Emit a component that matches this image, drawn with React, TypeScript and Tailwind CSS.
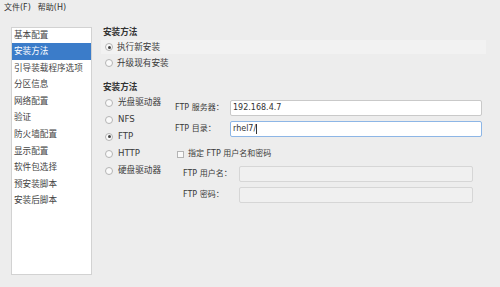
const FONT = "font-['DejaVu_Sans','Noto_Sans_CJK_SC',sans-serif]";

const categories = [
  "基本配置",
  "安装方法",
  "引导装载程序选项",
  "分区信息",
  "网络配置",
  "验证",
  "防火墙配置",
  "显示配置",
  "软件包选择",
  "预安装脚本",
  "安装后脚本",
];

const sources = ["光盘驱动器", "NFS", "FTP", "HTTP", "硬盘驱动器"];

function Radio({ checked }: { checked?: boolean }) {
  return (
    <span className="w-[8px] h-[8px] rounded-full border border-[#b4b4b4] bg-[#fafafa] flex items-center justify-center flex-shrink-0">
      {checked && <span className="w-[3px] h-[3px] rounded-full bg-[#444]" />}
    </span>
  );
}

export default function App() {
  return (
    <div className={`w-[500px] h-[287px] bg-[#ededed] text-[#3a3a3a] text-[8.6px] leading-none flex flex-col overflow-hidden ${FONT}`}>
      <div className="h-[15px] flex items-center gap-[7px] px-[4px] text-[#333] text-[8px]">
        <span>文件(F)</span>
        <span>帮助(H)</span>
      </div>

      <div className="flex flex-1">
        <div className="ml-[11px] mt-[12px] mb-[12px] w-[81px] bg-white border border-[#d2d2d2] flex flex-col">
          {categories.map((c, i) => (
            <div
              key={c}
              className={`${i === 0 ? "h-[15px]" : "h-[16.6px]"} flex items-center px-[2px] whitespace-nowrap ${
                i === 1 ? "bg-[#3b7cc9] text-white" : "text-[#444]"
              }`}
            >
              {c}
            </div>
          ))}
        </div>

        <div className="ml-[11px] flex-1 flex flex-col pr-[14px]">
          <div className="mt-[10px] h-[14px] flex items-center font-bold text-[#333]">安装方法</div>
          <div className="mt-[1px] h-[14px] flex items-center gap-[4px] pl-[4px] -ml-[2px] bg-[#f2f2f2]">
            <Radio checked />
            <span>执行新安装</span>
          </div>
          <div className="mt-[1px] h-[16px] flex items-center gap-[4px] pl-[2px]">
            <Radio />
            <span>升级现有安装</span>
          </div>

          <div className="mt-[9px] h-[14px] flex items-center font-bold text-[#333]">安装方法</div>

          <div className="flex">
            <div className="w-[72px] flex flex-col">
              {sources.map((s, i) => (
                <div key={s} className="h-[17px] flex items-center gap-[5px] pl-[2px]">
                  <Radio checked={i === 2} />
                  <span>{s}</span>
                </div>
              ))}
            </div>

            <div className="flex-1 flex flex-col text-[8px] pr-[4px]">
              <div className="mt-[6px] h-[16px] flex items-center">
                <span className="w-[55px]">FTP 服务器：</span>
                <div className="flex-1 h-full bg-white border border-[#c9c9c9] rounded-[2px] flex items-center px-[2px] text-[#333]">
                  192.168.4.7
                </div>
              </div>
              <div className="mt-[5px] h-[16px] flex items-center">
                <span className="w-[55px]">FTP 目录：</span>
                <div className="flex-1 h-full bg-white border border-[#8db6e6] rounded-[2px] flex items-center px-[2px] text-[#333]">
                  rhel7/<span className="w-px h-[10px] bg-[#333]" />
                </div>
              </div>
              <div className="mt-[9px] h-[16px] flex items-center gap-[4px] pl-[2px]">
                <span className="w-[7px] h-[7px] border border-[#b4b4b4] bg-[#fafafa]" />
                <span>指定 FTP 用户名和密码</span>
              </div>
              <div className="mt-[4px] h-[16px] flex items-center pl-[8px] pr-[9px]">
                <span className="w-[56px]">FTP 用户名：</span>
                <div className="flex-1 h-full bg-[#f0f0f0] border border-[#d6d6d6] rounded-[2px]" />
              </div>
              <div className="mt-[5px] h-[16px] flex items-center pl-[8px] pr-[9px]">
                <span className="w-[56px]">FTP 密码：</span>
                <div className="flex-1 h-full bg-[#f0f0f0] border border-[#d6d6d6] rounded-[2px]" />
              </div>
            </div>
          </div>
        </div>
      </div>
    </div>
  );
}
